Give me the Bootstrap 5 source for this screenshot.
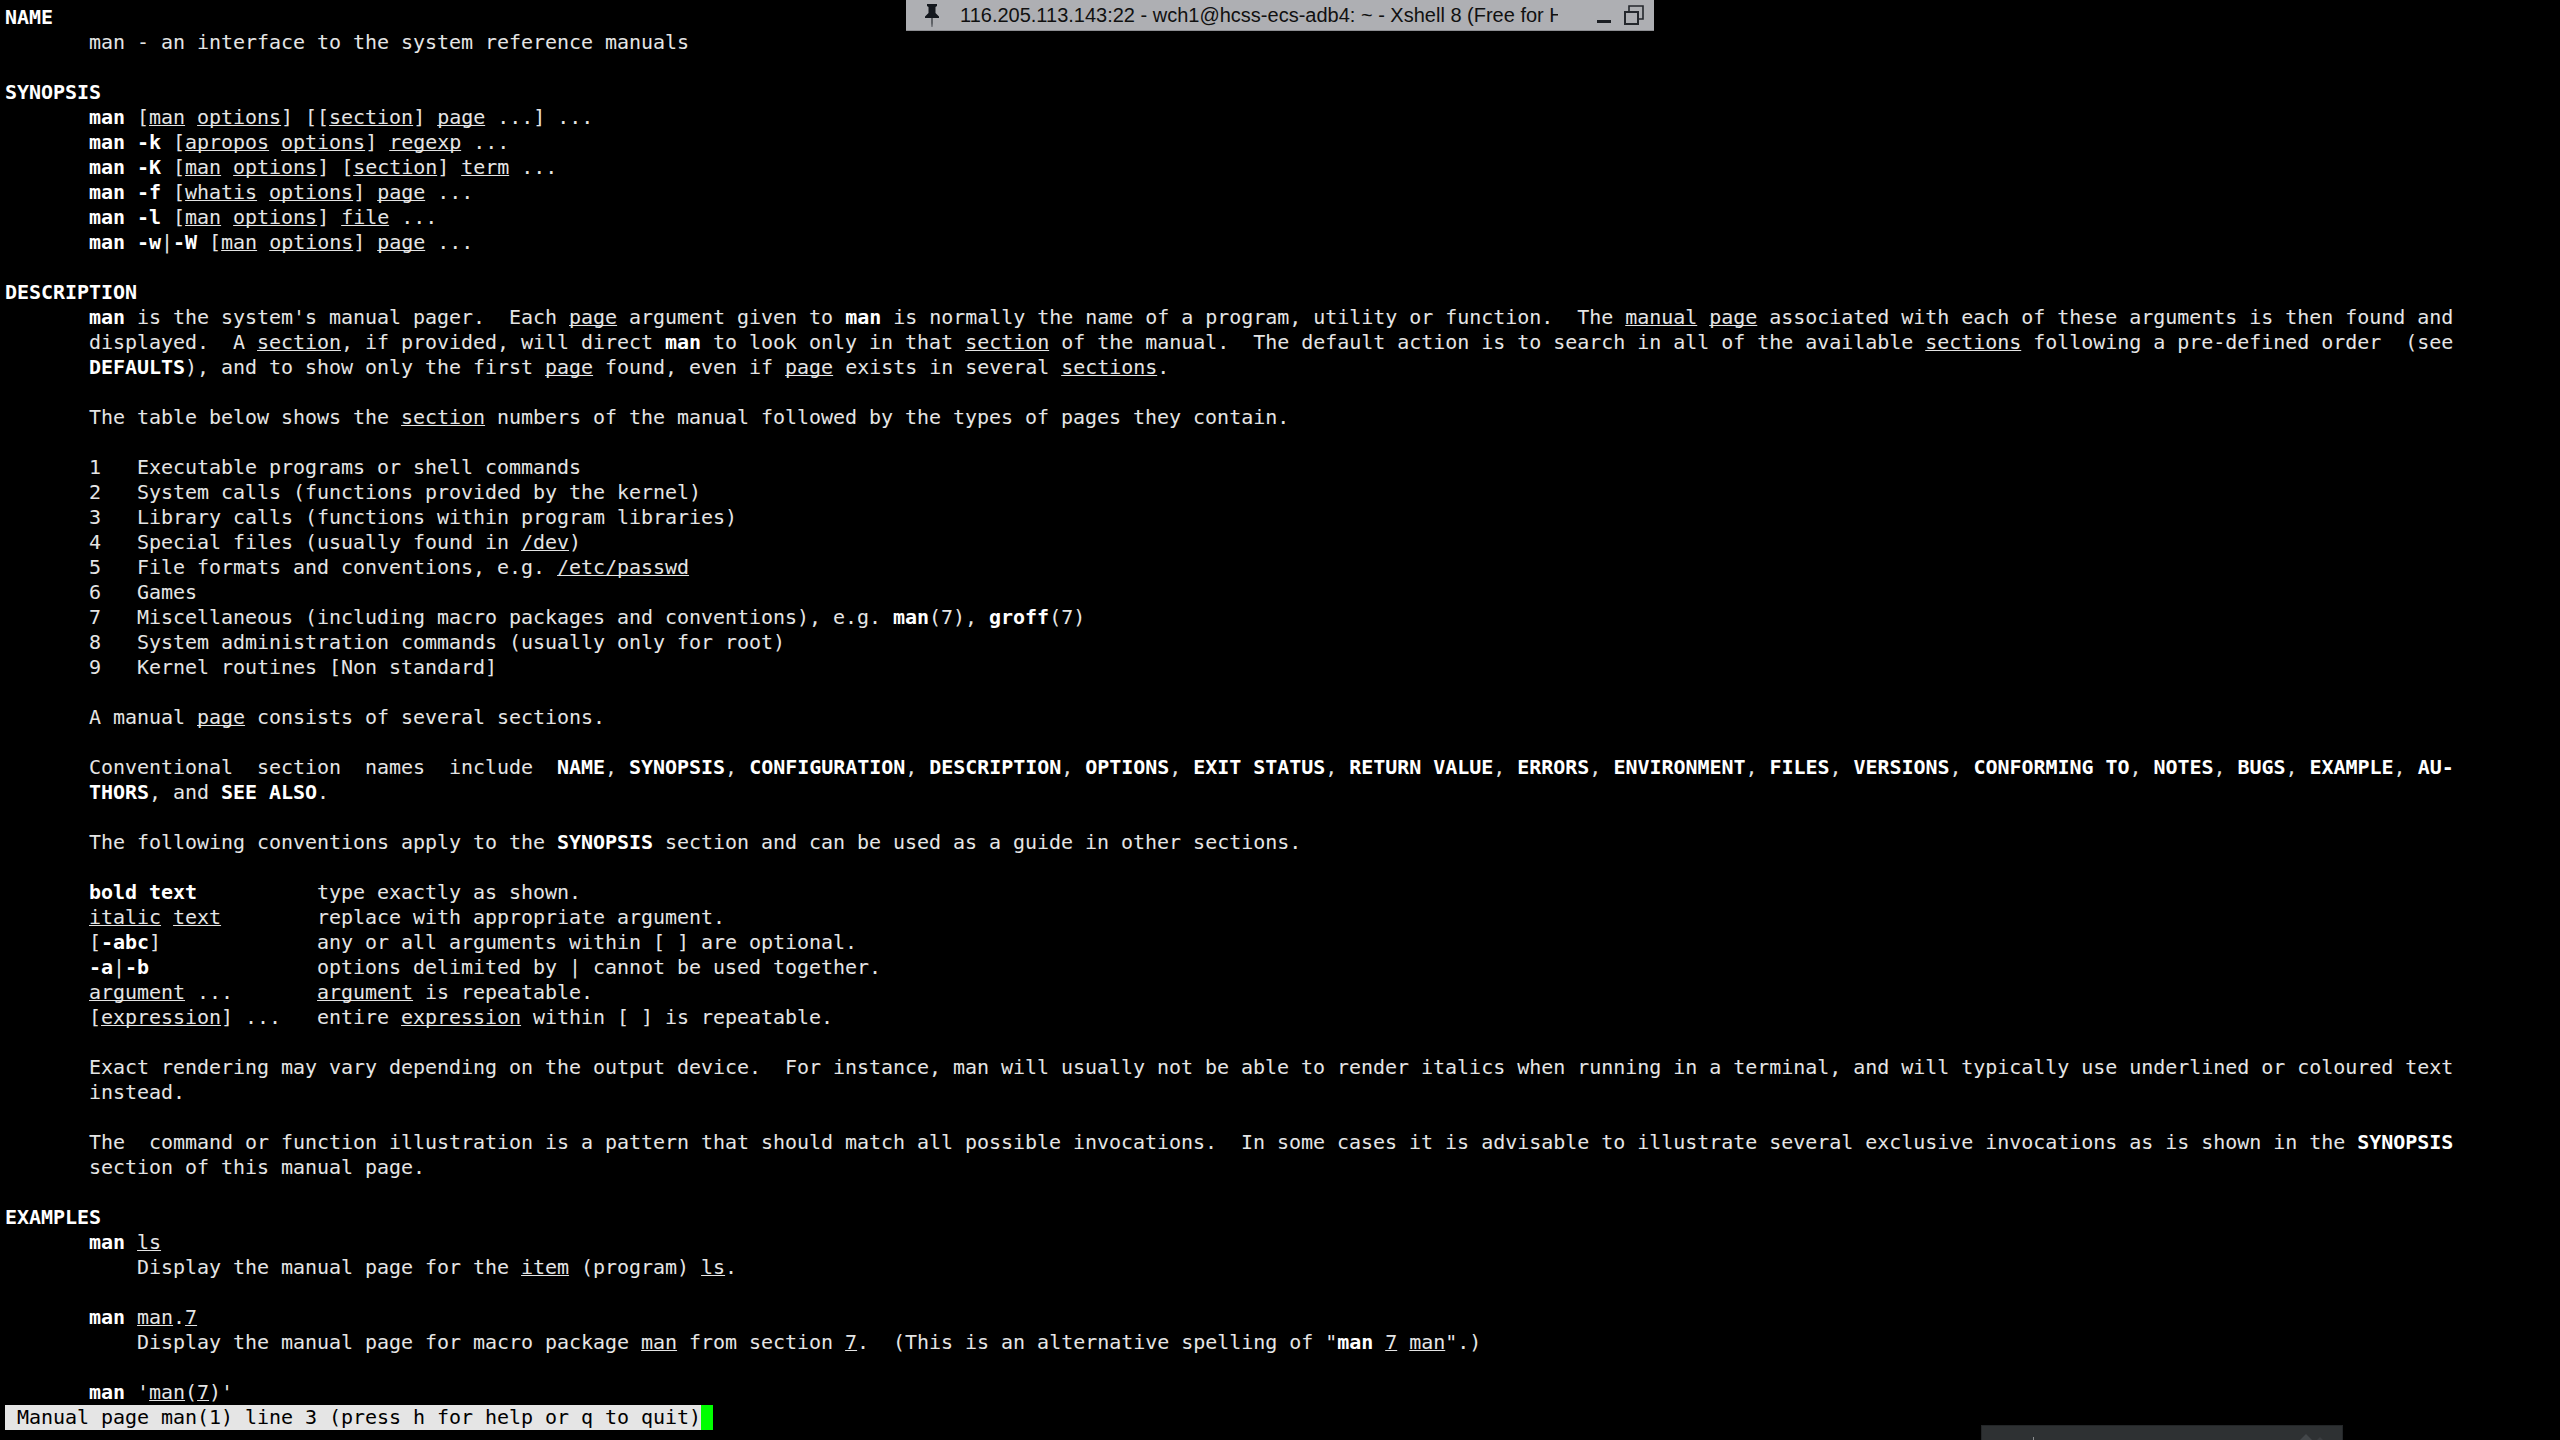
<!DOCTYPE html>
<html lang="en">
<head>
<meta charset="utf-8">
<title>man(1)</title>
<link href="https://cdn.jsdelivr.net/npm/bootstrap@5.3.0/dist/css/bootstrap.min.css" rel="stylesheet">
<style>
html, body { background: #000; height: 1440px; overflow: hidden; }
.term-screen { font-family: "DejaVu Sans Mono", "Liberation Mono", monospace; font-size: 20px; letter-spacing: -0.04px; line-height: 25px; color: #e5e5e5; margin: 0; padding: 5px 0 0 5px; background: #000; white-space: pre; overflow: hidden; font-variant-ligatures: none; }
.term-screen b { color: #fff; font-weight: 700; }
.term-screen u { text-underline-offset: 1px; text-decoration-thickness: 1px; text-decoration-skip-ink: none; }
.term-status { background: #e5e5e5; color: #000; display: inline-block; height: 25px; vertical-align: top; }
.term-cursor { background: #00ff00; display: inline-block; width: 12px; height: 25px; vertical-align: top; }
.xshell-bar { left: 906px; width: 748px; height: 31px; background: #aeafb3; border-bottom: 1px solid #8d8e92; z-index: 5; }
.xshell-pin { left: 18px; top: 4px; }
.xshell-title { left: 54px; width: 598px; top: 0; height: 30px; line-height: 30px; font-family: "Liberation Sans", Arial, sans-serif; font-size: 20px; color: #111; white-space: nowrap; overflow: hidden; }
.xshell-min { left: 691px; top: 20px; width: 14px; height: 3px; background: #1c1f24; }
.xshell-restore { left: 718px; top: 5px; }
.dim-panel { left: 1981px; top: 1425px; width: 362px; height: 15px; background: #2e3133; border: 1px solid #232628; border-bottom: 0; z-index: 5; }
.dim-marks { left: 0; top: 0; }
</style>
</head>
<body>
<pre class="term-screen"><b>NAME</b>
       man - an interface to the system reference manuals

<b>SYNOPSIS</b>
       <b>man</b> [<u>man</u> <u>options</u>] [[<u>section</u>] <u>page</u> ...] ...
       <b>man</b> <b>-k</b> [<u>apropos</u> <u>options</u>] <u>regexp</u> ...
       <b>man</b> <b>-K</b> [<u>man</u> <u>options</u>] [<u>section</u>] <u>term</u> ...
       <b>man</b> <b>-f</b> [<u>whatis</u> <u>options</u>] <u>page</u> ...
       <b>man</b> <b>-l</b> [<u>man</u> <u>options</u>] <u>file</u> ...
       <b>man</b> <b>-w</b>|<b>-W</b> [<u>man</u> <u>options</u>] <u>page</u> ...

<b>DESCRIPTION</b>
       <b>man</b> is the system's manual pager.  Each <u>page</u> argument given to <b>man</b> is normally the name of a program, utility or function.  The <u>manual</u> <u>page</u> associated with each of these arguments is then found and
       displayed.  A <u>section</u>, if provided, will direct <b>man</b> to look only in that <u>section</u> of the manual.  The default action is to search in all of the available <u>sections</u> following a pre-defined order  (see
       <b>DEFAULTS</b>), and to show only the first <u>page</u> found, even if <u>page</u> exists in several <u>sections</u>.

       The table below shows the <u>section</u> numbers of the manual followed by the types of pages they contain.

       1   Executable programs or shell commands
       2   System calls (functions provided by the kernel)
       3   Library calls (functions within program libraries)
       4   Special files (usually found in <u>/dev</u>)
       5   File formats and conventions, e.g. <u>/etc/passwd</u>
       6   Games
       7   Miscellaneous (including macro packages and conventions), e.g. <b>man</b>(7), <b>groff</b>(7)
       8   System administration commands (usually only for root)
       9   Kernel routines [Non standard]

       A manual <u>page</u> consists of several sections.

       Conventional  section  names  include  <b>NAME</b>, <b>SYNOPSIS</b>, <b>CONFIGURATION</b>, <b>DESCRIPTION</b>, <b>OPTIONS</b>, <b>EXIT</b> <b>STATUS</b>, <b>RETURN</b> <b>VALUE</b>, <b>ERRORS</b>, <b>ENVIRONMENT</b>, <b>FILES</b>, <b>VERSIONS</b>, <b>CONFORMING</b> <b>TO</b>, <b>NOTES</b>, <b>BUGS</b>, <b>EXAMPLE</b>, <b>AU-</b>
       <b>THORS</b>, and <b>SEE</b> <b>ALSO</b>.

       The following conventions apply to the <b>SYNOPSIS</b> section and can be used as a guide in other sections.

       <b>bold</b> <b>text</b>          type exactly as shown.
       <u>italic</u> <u>text</u>        replace with appropriate argument.
       [<b>-abc</b>]             any or all arguments within [ ] are optional.
       <b>-a</b>|<b>-b</b>              options delimited by | cannot be used together.
       <u>argument</u> ...       <u>argument</u> is repeatable.
       [<u>expression</u>] ...   entire <u>expression</u> within [ ] is repeatable.

       Exact rendering may vary depending on the output device.  For instance, man will usually not be able to render italics when running in a terminal, and will typically use underlined or coloured text
       instead.

       The  command or function illustration is a pattern that should match all possible invocations.  In some cases it is advisable to illustrate several exclusive invocations as is shown in the <b>SYNOPSIS</b>
       section of this manual page.

<b>EXAMPLES</b>
       <b>man</b> <u>ls</u>
           Display the manual page for the <u>item</u> (program) <u>ls</u>.

       <b>man</b> <u>man</u>.<u>7</u>
           Display the manual page for macro package <u>man</u> from section <u>7</u>.  (This is an alternative spelling of "<b>man</b> <u>7</u> <u>man</u>".)

       <b>man</b> '<u>man</u>(<u>7</u>)'
<span class="term-status"> Manual page man(1) line 3 (press h for help or q to quit)</span><span class="term-cursor"></span></pre>

<div class="xshell-bar position-absolute top-0">
  <svg class="xshell-pin position-absolute" width="16" height="23" viewBox="0 0 16 23"><path d="M3 0h10v2l-1.5 1v6l3.5 3.5V14H1v-1.5L4.5 9V3L3 2z" fill="#14181e"/><path d="M7.2 14h1.6v5l-.4 4h-.8l-.4-4z" fill="#4a4d52"/></svg>
  <div class="xshell-title position-absolute">116.205.113.143:22 - wch1@hcss-ecs-adb4: ~ - Xshell 8 (Free for H</div>
  <div class="xshell-min position-absolute"></div>
  <svg class="xshell-restore position-absolute" width="20" height="20" viewBox="0 0 20 20" fill="none" stroke="#24272c"><rect x="1" y="7" width="13" height="12" stroke-width="2"/><path d="M5 7V1h14v13h-5" stroke-width="1.6"/></svg>
</div>
<div class="dim-panel position-absolute">
  <svg class="dim-marks position-absolute" width="360" height="15" viewBox="0 0 360 15"><rect x="51" y="11" width="1" height="4" fill="#8a8d8f"/><path d="M318 14l6-6 6 6z" fill="#43474a"/><path d="M335 14l3-3 3 3z" fill="#3a3d40"/></svg>
</div>
<script src="https://cdn.jsdelivr.net/npm/bootstrap@5.3.0/dist/js/bootstrap.bundle.min.js"></script>
</body>
</html>
